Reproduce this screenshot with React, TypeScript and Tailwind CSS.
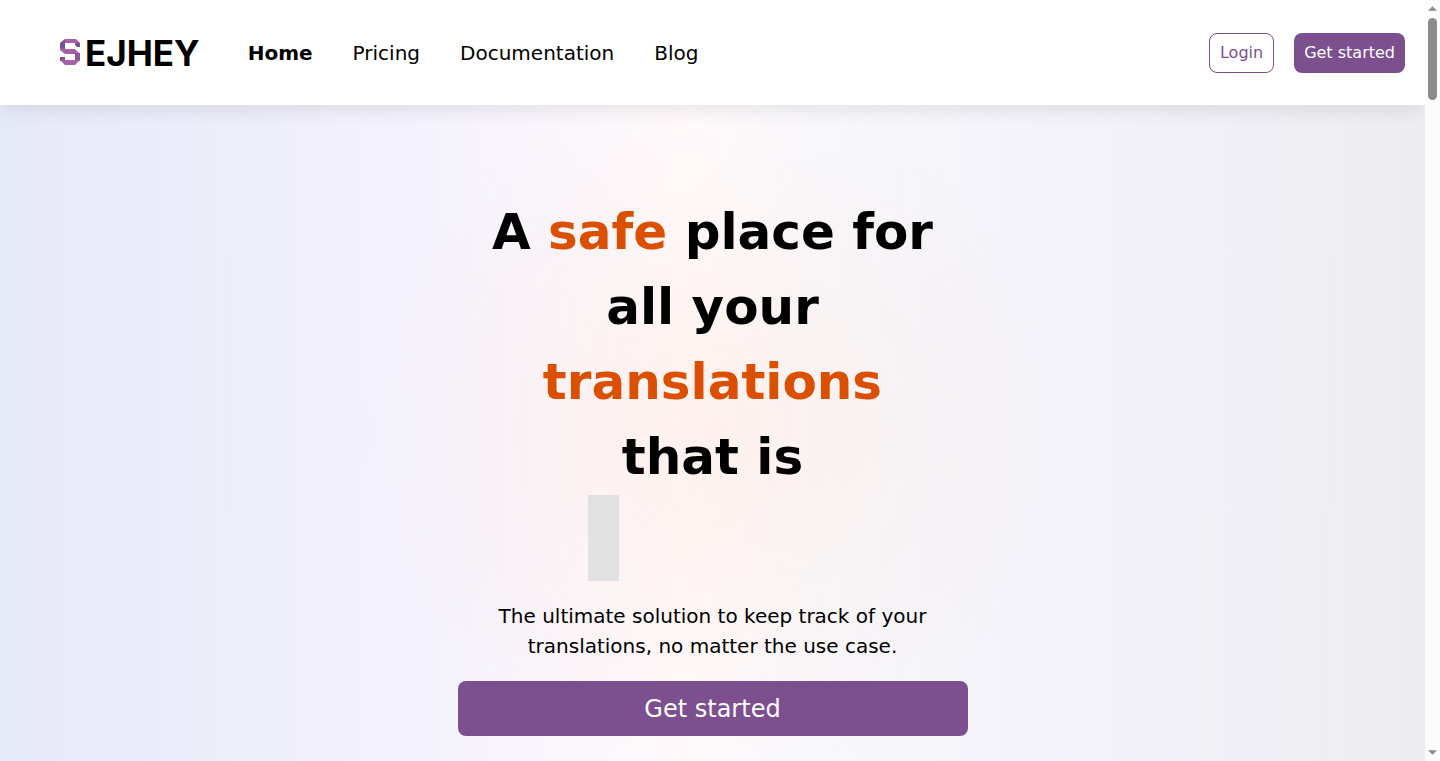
const navLinks = [
  { label: "Home", href: "#home", active: true },
  { label: "Pricing", href: "#pricing", active: false },
  { label: "Documentation", href: "#documentation", active: false },
  { label: "Blog", href: "#blog", active: false },
];

/** The brand: a folded-ribbon S followed by the rest of the name. */
function Logo() {
  return (
    <a href="#home" aria-label="Sejhey" className="flex items-center gap-1">
      <svg viewBox="0 0 21 27" className="h-[27px] w-[21px]" aria-hidden="true">
        <path d="M5 0h11l4 4H5z" fill="#a65fa8" />
        <path d="M5 0v12L0 9V4z" fill="#7c4f8e" />
        <path d="M15 4h5v4h-3l-2-2z" fill="#7c4f8e" />
        <path d="M0 9l5 1h10l5 5H5l-5-4z" fill="#a65fa8" />
        <path d="M15 14h5v8h-5z" fill="#8f5499" />
        <path d="M0 18h5v4H0z" fill="#7c4f8e" />
        <path d="M0 21h20l-5 5H5z" fill="#a65fa8" />
      </svg>
      <span className="font-['Inter',sans-serif] text-[35px] leading-10 font-bold text-black">
        EJHEY
      </span>
    </a>
  );
}

function Header() {
  return (
    <header className="relative z-10 flex h-[105px] items-center justify-between bg-white pr-5 pl-[60px] shadow-[0_8px_18px_-3px_rgba(0,0,0,0.09)]">
      <div className="flex items-center gap-12">
        <Logo />
        <nav className="flex items-center gap-10 text-xl">
          {navLinks.map((link) => (
            <a key={link.label} href={link.href} className={link.active ? "font-bold" : ""}>
              {link.label}
            </a>
          ))}
        </nav>
      </div>
      <div className="flex items-center gap-5">
        <button
          type="button"
          className="h-10 rounded-lg border border-[#7c4f8e] px-2.5 text-[#7c4f8e]"
        >
          Login
        </button>
        <button type="button" className="h-10 rounded-lg bg-[#7c4f8e] px-2.5 text-white">
          Get started
        </button>
      </div>
    </header>
  );
}

function Hero() {
  return (
    <main className="flex flex-1 flex-col items-center bg-[radial-gradient(circle_at_50%_50%,rgba(255,226,212,0.38),rgba(255,226,212,0)_350px),linear-gradient(to_right,#e6e9f8,#f4f2fc_30%,#fffafc_48%,#f8f8fc_57%,#f3f3f9_71%,#ececf1)] px-5 pt-[90px] pb-6 text-center">
      <div className="w-full max-w-[510px]">
        <h1 className="text-[50px] leading-[75px] font-bold">
          A <span className="text-[#db4f00]">safe</span> place for
          <br />
          all your
          <br />
          <span className="text-[#db4f00]">translations</span>
          <br />
          that is
        </h1>
        {/* typewriter line, only the caret is showing */}
        <div className="mx-auto flex h-[86px] w-[250px]">
          <span className="w-[31px] bg-[#e1e1e1]" />
        </div>
        <p className="mt-5 px-5 text-xl leading-[30px]">
          The ultimate solution to keep track of your translations, no matter the use case.
        </p>
        <button
          type="button"
          className="mt-5 h-[55px] w-full rounded-lg bg-[#7c4f8e] text-2xl text-white"
        >
          Get started
        </button>
      </div>
    </main>
  );
}

function ScrollRail() {
  return (
    <div
      className="relative z-20 flex w-[15px] shrink-0 flex-col items-center justify-between bg-[#fcfcfc] py-1.5"
      aria-hidden="true"
    >
      <div className="flex flex-col items-center gap-[7px]">
        <svg viewBox="0 0 10 5" className="h-[5px] w-[9px]">
          <path d="M0 5L5 0L10 5z" fill="#8b8b8b" />
        </svg>
        <span className="h-[82px] w-[9px] rounded-full bg-[#8b8b8b]" />
      </div>
      <svg viewBox="0 0 10 5" className="h-[5px] w-[9px]">
        <path d="M0 0L5 5L10 0z" fill="#8b8b8b" />
      </svg>
    </div>
  );
}

export default function App() {
  return (
    <div className="flex min-h-screen bg-white font-['DejaVu_Sans',sans-serif] text-black">
      <div className="flex min-w-0 flex-1 flex-col">
        <Header />
        <Hero />
      </div>
      <ScrollRail />
    </div>
  );
}
